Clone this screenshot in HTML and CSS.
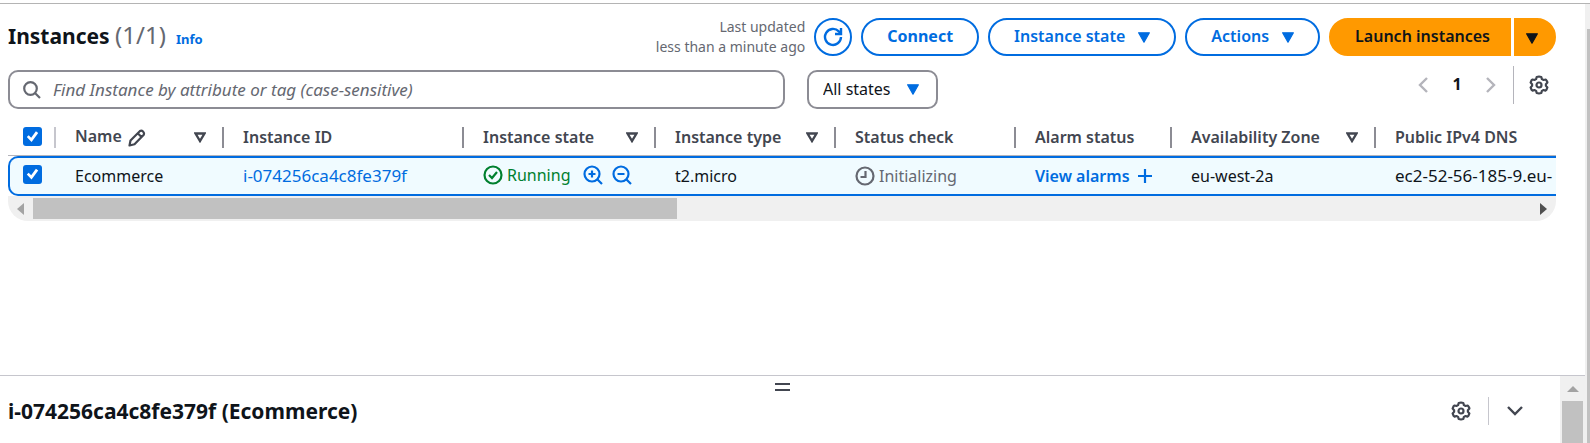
FILE: index.html
```html
<!DOCTYPE html>
<html lang="en">
<head>
<meta charset="utf-8">
<title>Instances | EC2</title>
<link rel="stylesheet" href="styles.css">
</head>
<body>
<svg class="sprite" aria-hidden="true">
  <symbol id="caret" viewBox="0 0 12 11"><path d="M.6 .8h10.800L6 10.200z" fill="currentColor" stroke="currentColor" stroke-width="1.200" stroke-linejoin="round"/></symbol>
  <symbol id="sort" viewBox="0 0 12 11"><path d="M1.500 1.500h9L6 9z" fill="none" stroke="currentColor" stroke-width="2.400"/></symbol>
  <symbol id="gear" viewBox="0 0 20 20"><path d="M10 1.500 L12.300 2 L12.900 4.100 L14.600 5 L16.800 4.500 L18.200 6.600 L18.400 7.600 L16.900 9.200 L16.900 10.800 L18.400 12.400 L17.400 14.900 L16.400 15.600 L14.600 15 L12.900 15.900 L12.300 18 L10 18.500 L7.700 18 L7.100 15.900 L5.400 15 L3.600 15.600 L2.600 14.900 L1.600 12.400 L3.100 10.800 L3.100 9.200 L1.600 7.600 L2.600 5.100 L3.600 4.500 L5.400 5 L7.100 4.100 L7.700 2 Z" fill="none" stroke="currentColor" stroke-width="2.200" stroke-linejoin="round"/><circle cx="10" cy="10" r="2.500" fill="none" stroke="currentColor" stroke-width="2.200"/></symbol>
</svg>
<div class="app">
  <div class="content">
    <main class="main">
      <header class="header">
        <h1 class="title">Instances <span class="count">(1/1)</span></h1>
        <a class="info" href="#">Info</a>
        <div class="actions">
          <p class="updated">Last updated<br>less than a minute ago</p>
          <button class="btn btn-round" aria-label="Refresh">
            <svg width="20" height="20" viewBox="0 0 20 20" fill="none" stroke="currentColor" stroke-width="2.400"><path d="M18 10a8 8 0 1 1-2.200-5.600L18 6.600"/><path d="M18 1v6h-6"/></svg>
          </button>
          <button class="btn btn-connect">Connect</button>
          <button class="btn">Instance state <svg class="caret"><use href="#caret"/></svg></button>
          <button class="btn">Actions <svg class="caret"><use href="#caret"/></svg></button>
          <div class="split-btn">
            <button class="btn btn-primary">Launch instances</button>
            <button class="btn btn-primary btn-more" aria-label="More launch options"><svg class="caret"><use href="#caret"/></svg></button>
          </div>
        </div>
      </header>

      <div class="filters">
        <label class="search">
          <svg width="18" height="18" viewBox="0 0 18 18" fill="none" stroke="currentColor" stroke-width="2.200"><circle cx="7.500" cy="7.500" r="6.300"/><path d="M12 12l5 5"/></svg>
          <input type="text" aria-label="Find Instance" placeholder="Find Instance by attribute or tag (case-sensitive)">
        </label>
        <div class="select">
          <select aria-label="Instance state filter"><option>All states</option></select>
          <svg class="caret"><use href="#caret"/></svg>
        </div>
        <nav class="pager" aria-label="Pagination">
          <button class="icon-btn muted" aria-label="Previous page"><svg width="10" height="18" viewBox="0 0 10 18" fill="none" stroke="currentColor" stroke-width="2.400"><path d="M9 2L2 9L9 16"/></svg></button>
          <button class="icon-btn page">1</button>
          <button class="icon-btn muted" aria-label="Next page"><svg width="10" height="18" viewBox="0 0 10 18" fill="none" stroke="currentColor" stroke-width="2.400"><path d="M1 2L8 9L1 16"/></svg></button>
        </nav>
        <button class="icon-btn settings" aria-label="Preferences"><svg width="20" height="20"><use href="#gear"/></svg></button>
      </div>

      <div class="table-box">
        <table class="table">
          <colgroup><col class="c-check"><col class="c-name"><col class="c-id"><col class="c-state"><col class="c-type"><col class="c-status"><col class="c-alarm"><col class="c-zone"><col class="c-dns"></colgroup>
          <thead>
            <tr>
              <th class="check light"><input type="checkbox" aria-label="Select all" checked></th>
              <th><div class="th"><span class="label">Name <svg width="18" height="18" viewBox="0 0 18 18" fill="none" stroke="currentColor" stroke-width="2.200" stroke-linejoin="round"><path d="M1.500 16.500l1-5L12 2q1.500-1 3 .5t.8 3.200L6.500 15.200zM10 4.500l3.500 3.500"/></svg></span><svg class="sort"><use href="#sort"/></svg></div></th>
              <th>Instance ID</th>
              <th><div class="th">Instance state<svg class="sort"><use href="#sort"/></svg></div></th>
              <th><div class="th">Instance type<svg class="sort"><use href="#sort"/></svg></div></th>
              <th>Status check</th>
              <th>Alarm status</th>
              <th><div class="th">Availability Zone<svg class="sort"><use href="#sort"/></svg></div></th>
              <th>Public IPv4 DNS</th>
            </tr>
          </thead>
          <tbody>
            <tr>
              <td class="check"><input type="checkbox" aria-label="Select Ecommerce" checked></td>
              <td>Ecommerce</td>
              <td><a class="id" href="#">i-074256ca4c8fe379f</a></td>
              <td>
                <div class="state">
                  <span class="status ok"><svg width="20" height="20" viewBox="0 0 20 20" fill="none" stroke="currentColor" stroke-width="2.200"><circle cx="10" cy="10" r="8.500"/><path d="M6 10l3 3 5-6"/></svg>Running</span>
                  <button class="zoom" aria-label="Add filter"><svg width="20" height="20" viewBox="0 0 20 20" fill="none" stroke="currentColor" stroke-width="2.200"><circle cx="9" cy="9" r="7.500"/><path d="M14 14l5 5M9 5.500v7M5.500 9h7"/></svg></button>
                  <button class="zoom" aria-label="Exclude filter"><svg width="20" height="20" viewBox="0 0 20 20" fill="none" stroke="currentColor" stroke-width="2.200"><circle cx="9" cy="9" r="7.500"/><path d="M14 14l5 5M5.500 9h7"/></svg></button>
                </div>
              </td>
              <td>t2.micro</td>
              <td><span class="status pending"><svg width="20" height="20" viewBox="0 0 20 20" fill="none" stroke="currentColor" stroke-width="2.200"><circle cx="10" cy="10" r="8.500"/><path d="M10.500 5v6H5.500"/></svg>Initializing</span></td>
              <td><button class="alarms">View alarms <svg width="16" height="16" viewBox="0 0 16 16" fill="none" stroke="currentColor" stroke-width="2.200"><path d="M8 1v14M1 8h14"/></svg></button></td>
              <td>eu-west-2a</td>
              <td><span class="id">ec2-52-56-185-9.eu-</span></td>
            </tr>
          </tbody>
        </table>
        <div class="hbar">
          <svg width="7" height="12" viewBox="0 0 7 12"><path d="M7 0v12L0 6z" fill="#a3a3a3"/></svg>
          <div class="htrack"><div class="hthumb"></div></div>
          <svg width="7" height="12" viewBox="0 0 7 12"><path d="M0 0v12l7-6z" fill="#505050"/></svg>
        </div>
      </div>
    </main>

    <section class="panel">
      <div class="panel-body">
        <div class="handle"></div>
        <div class="panel-head">
          <h2>i-074256ca4c8fe379f (Ecommerce)</h2>
          <button class="icon-btn" aria-label="Panel preferences"><svg width="20" height="20"><use href="#gear"/></svg></button>
          <button class="icon-btn collapse" aria-label="Close panel"><svg width="18" height="12" viewBox="0 0 18 12" fill="none" stroke="currentColor" stroke-width="2.400"><path d="M2 2L9 9L16 2"/></svg></button>
        </div>
      </div>
      <div class="vbar">
        <svg width="12" height="6" viewBox="0 0 12 6"><path d="M0 6h12L6 0z" fill="#a3a3a3"/></svg>
        <div class="vthumb"></div>
      </div>
    </section>
  </div>
  <div class="page-bar"></div>
</div>
</body>
</html>
```
FILE: styles.css
```css
* { box-sizing: border-box; }

body {
  margin: 0;
  background: #fff;
  color: #0f141a;
  font: 16px/24px "Noto Sans", sans-serif;
}

button, input, select { font: inherit; color: inherit; }
button { padding: 0; border: 0; background: none; }
svg { display: block; flex: none; }
a { color: #006ce0; text-decoration: none; }
.sprite { position: absolute; width: 0; height: 0; }

.app { display: flex; height: 100vh; padding-top: 3px; }
.content { flex: 1; min-width: 0; display: flex; flex-direction: column; border-top: 1px solid #b4b4b4; }
.main { flex: 1; padding: 13px 29px 0 8px; min-height: 0; }

.page-bar { width: 5px; border-top: 1px solid #b4b4b4; background: #f0f0f0; padding: 25px 0 0 2px; }
.page-bar::before { content: ""; display: block; height: 100%; background: #c1c1c1; }

/* Header */
.header { display: flex; align-items: center; }
.title { margin: 0; padding-bottom: 4px; font-size: 21px; font-weight: 700; line-height: 28px; }
.count { font-size: 24px; font-weight: 400; color: #656871; }
.info { margin: 4px 0 0 10px; font-size: 13px; font-weight: 700; line-height: 20px; }
.actions { display: flex; align-items: center; gap: 9px; margin-left: auto; }
.updated { margin: 0; text-align: right; font-size: 14px; line-height: 20px; color: #656871; }

.btn {
  display: flex;
  align-items: center;
  gap: 13px;
  height: 38px;
  padding: 0 24px 2px;
  border: 2px solid #006ce0;
  border-radius: 20px;
  background: #fff;
  color: #006ce0;
  font-weight: 600;
  white-space: nowrap;
}
.btn-round { width: 38px; padding: 0; justify-content: center; }
.btn-connect { font-weight: 700; }
.caret { width: 12px; height: 11px; }
.btn .caret { margin-top: 2px; }
.split-btn { display: flex; gap: 3px; }
.btn-primary { border-color: #ff9900; background: #ff9900; color: #0f141a; border-radius: 20px 0 0 20px; padding: 0 19px 2px 24px; }
.btn-more { border-radius: 0 20px 20px 0; padding: 0 16px 0 10px; }

/* Filters */
.filters { display: flex; margin-top: 13px; color: #424650; }
.search {
  display: flex;
  align-items: center;
  gap: 12px;
  flex: 0 1 777px;
  height: 39px;
  padding: 0 13px;
  border: 2px solid #8c8c94;
  border-radius: 10px;
  color: #656871;
}
.search input { flex: 1; min-width: 0; padding: 0; border: 0; outline: 0; background: none; font-size: 17px; }
.search input::placeholder { color: #656871; font-style: italic; opacity: 1; }
.select { display: grid; align-items: center; width: 131px; margin-left: 22px; color: #0f141a; }
.select select {
  grid-area: 1 / 1;
  appearance: none;
  height: 39px;
  padding: 0 14px 2px;
  border: 2px solid #8c8c94;
  border-radius: 10px;
  background: #fff;
}
.select .caret { grid-area: 1 / 1; justify-self: end; margin-right: 19px; color: #006ce0; pointer-events: none; }
.pager { display: flex; margin-left: auto; height: 30px; }
.icon-btn { display: flex; align-items: center; justify-content: center; width: 34px; color: #424650; }
.icon-btn.muted { color: #b4b4bb; }
.icon-btn.page { padding-bottom: 2px; font-weight: 700; color: #0f141a; }
.settings { width: 43px; height: 38px; margin: -4px 0 0 5px; padding-left: 8px; border-left: 1px solid #b4b4bb; }

/* Table */
.table-box { overflow: hidden; border-radius: 0 0 20px 20px; }
.table { width: 100%; min-width: 1668px; table-layout: fixed; border-collapse: separate; border-spacing: 0; text-align: left; }
.c-check { width: 48px; }
.c-name { width: 168px; }
.c-id { width: 240px; }
.c-state { width: 192px; }
.c-type, .c-status { width: 180px; }
.c-alarm { width: 156px; }
.c-zone { width: 204px; }

th { position: relative; height: 47px; padding: 10px 18px 0 19px; border-bottom: 1px solid #b4b4bb; color: #424650; font-weight: 600; white-space: nowrap; }
th::after { content: ""; position: absolute; right: 0; top: 18px; width: 2px; height: 21px; background: #8c8c94; }
th.light::after { background: #c6c6cd; }
.th { display: flex; align-items: center; justify-content: space-between; }
.label { display: flex; align-items: center; gap: 6px; padding-bottom: 3px; }
.label svg { margin-top: 4px; }
.sort { width: 12px; height: 11px; }

td { height: 40px; padding: 0 0 0 19px; border: 2px solid #006ce0; border-width: 2px 0; background: #f0fbff; white-space: nowrap; }
td:first-child { border-left-width: 2px; border-radius: 10px 0 0 10px; }
th.check { padding: 9px 0 0 15px; }
td.check { padding: 0 0 4px 13px; }

input[type="checkbox"] { appearance: none; display: block; width: 19px; height: 19px; margin: 0; border-radius: 3px; background: #006ce0; }
input[type="checkbox"]::before {
  content: "";
  display: block;
  height: 19px;
  background: #fff;
  clip-path: polygon(20% 53%, 30% 43%, 43% 56%, 68% 22%, 80% 31%, 45% 79%);
}

.id { font-size: 17px; }
.state { display: flex; align-items: center; padding-bottom: 3px; }
.status { display: flex; align-items: center; gap: 4px; }
.ok { color: #00802f; margin-right: 4px; }
.pending { color: #656871; }
.zoom { margin-left: 9px; color: #006ce0; }
.alarms { display: flex; align-items: center; gap: 7px; color: #006ce0; font-weight: 600; }

.hbar { display: flex; align-items: center; gap: 9px; height: 25px; padding: 0 9px; background: #f0f0f0; }
.htrack { flex: 1; }
.hthumb { width: 43%; height: 21px; background: #c1c1c1; }

/* Split panel */
.panel { display: flex; height: 68px; border-top: 1px solid #c6c6cd; }
.panel-body { flex: 1; padding: 7px 4px 0 8px; }
.handle { width: 15px; height: 8px; margin: 0 auto; border: 2px solid #424650; border-width: 2px 0; }
.panel-head { display: flex; align-items: center; margin-top: 6px; padding-right: 15px; }
.panel-head h2 { flex: 1; margin: 0; font-size: 21px; font-weight: 700; line-height: 28px; }
.collapse { width: 53px; height: 28px; margin-left: 10px; border-left: 1px solid #c6c6cd; }
.vbar { display: flex; flex-direction: column; align-items: center; gap: 9px; width: 25px; padding-top: 10px; background: #f0f0f0; }
.vthumb { flex: 1; width: 21px; background: #c1c1c1; }
```
